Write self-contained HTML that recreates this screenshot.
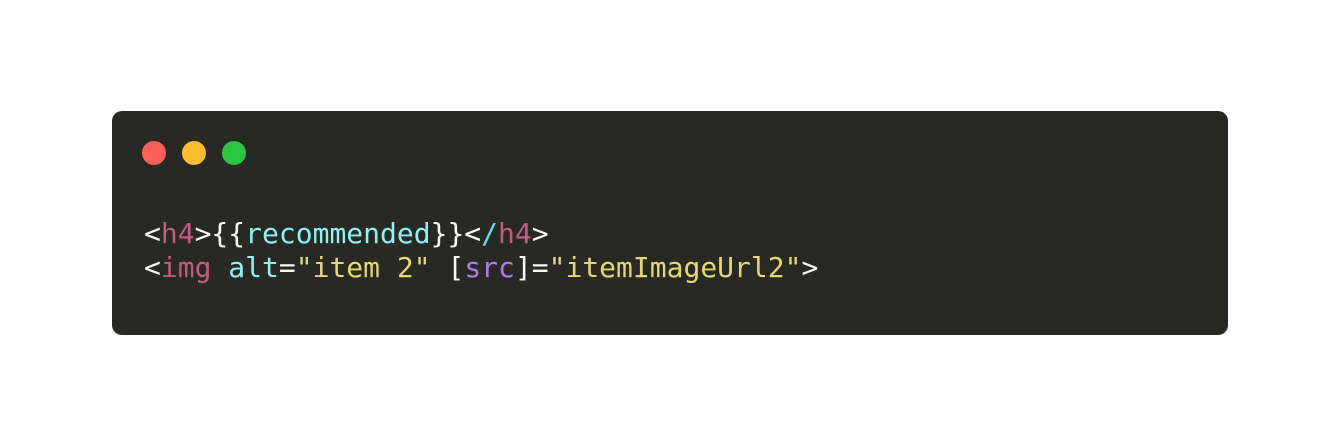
<!DOCTYPE html>
<html><head><meta charset="utf-8"><style>
html,body{margin:0;padding:0;background:#fff;width:1340px;height:446px;overflow:hidden}
.win{position:absolute;left:112px;top:111px;width:1116px;height:224px;background:#282923;border-radius:10px}
.d{position:absolute;top:30px;width:24px;height:24px;border-radius:50%}
pre{position:absolute;left:32px;top:106px;margin:0;font-family:"DejaVu Sans Mono","Liberation Mono",monospace;font-size:28px;line-height:34px;color:#f8f8f2}
.t{color:#c25a81}.a{color:#8ef1f2}.s{color:#e5d874}.p{color:#ae7cf5}.b{color:#66d9ef}
</style></head><body>
<div class="win">
<div class="d" style="left:30px;background:#ff5f57"></div>
<div class="d" style="left:70px;background:#febc2e"></div>
<div class="d" style="left:110px;background:#28c840"></div>
<pre>&lt;<span class="t">h4</span>&gt;{{<span class="a">recommended</span>}}&lt;<span class="b">/</span><span class="t">h4</span>&gt;
&lt;<span class="t">img</span> <span class="a">alt</span>=<span class="s">"item 2"</span> [<span class="p">src</span>]=<span class="s">"itemImageUrl2"</span>&gt;</pre>
</div>
</body></html>
